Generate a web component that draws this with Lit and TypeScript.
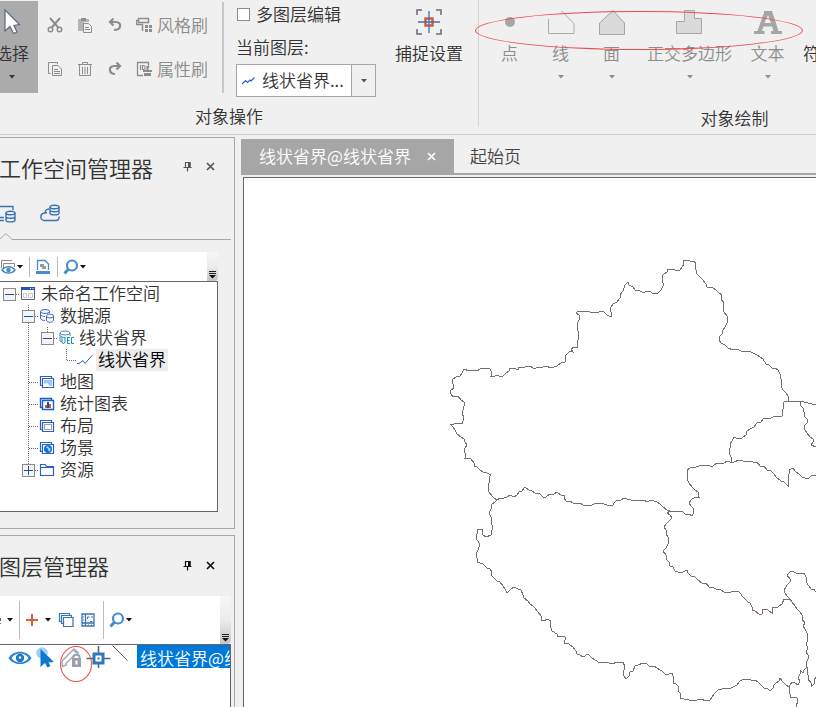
import { LitElement, html, svg, css, nothing, TemplateResult } from "lit";
import { customElement, state } from "lit/decorators.js";
import { classMap } from "lit/directives/class-map.js";

type Pt = [number, number];

/* Province boundaries, in map canvas units. */
const BORDERS: string[] = [
  "628,282 624,288 620,298 613,304 610,310 611,317 607,315 603,311 590,312 578,311 576,313 579,315 579,320 577,327 578,340 577,347 571,349 573,352 570,351 566,355 565,362 557,366 543,367 533,368 527,366 519,367 518,370 510,368 506,373 500,377 498,375 491,376 490,369 480,369 473,370 464,369 460,376 452,380 454,388 450,391 453,397 458,396 464,402 463,410 462,424 450,424 455,430 461,437 464,439 467,445 464,451 465,458 471,459 474,466 483,472 491,475 489,477 489,492 497,500",
  "497,500 507,497 517,495 525,487 532,491 546,497 557,492 564,495 566,501 573,503 583,505 600,503 607,505 613,505 617,500 627,499 640,500 654,501 660,504 670,511 678,511 692,516 693,508 689,503 692,499 699,497 698,492 689,483 687,470 692,467 710,466 720,463 730,462 743,461 753,462 764,466 777,478 788,486 789,470 793,468 805,478 812,475 820,475",
  "628,282 635,290 645,292 658,293 661,290 663,275 668,269 677,271 682,267 683,260 690,261 696,263 696,270 700,277 707,287 713,288 722,295 723,307 727,316 725,327 719,337 721,343 728,348 737,349 753,353 760,357 772,368 778,370 780,377 783,390 788,396 788,401",
  "788,401 784,402 782,416 764,418 750,429 742,438 734,437 730,448 731,462",
  "800,401 804,412 807,423 804,426 807,433 813,439 811,445 820,446",
  "670,511 667,513 672,518 664,527 668,537 666,548 663,551 670,566 678,572 687,570 691,576 702,583 713,587 727,593 738,591 745,599 750,603 752,610 762,614 763,609 772,613 773,607 782,604 784,599 790,599",
  "790,599 785,593 784,590 790,582 787,575 792,571 804,573 808,585 820,595",
  "790,599 800,612 805,623 803,626 807,636 807,667 811,687 820,670",
  "807,667 803,673 800,670 798,685 792,682 789,687 780,678 776,683 770,691 758,682 744,679 733,687 718,690 710,700 697,700 680,698 679,687 673,683 672,673 665,674 657,668 643,663 638,665 630,672 626,679 623,673 625,667 623,662 613,664 600,663 595,660 588,654 583,657 577,654 573,647 564,643 565,637 558,637 551,628 551,621 547,619 541,620 538,612 530,604 523,595 521,590 514,587 507,593 500,582 491,575 490,569 483,564 477,562 476,554 479,543 476,538 477,530 483,529 483,535 486,537 491,535 492,525 489,513 492,504 497,500",
  "789,687 791,698 797,698 797,712",
];

/* Breaks long runs into short ones with a slight wobble, as surveyed borders have. */
function roughen(line: string): string {
  const pts = line.split(" ").map((p) => p.split(",").map(Number) as Pt);
  const out: string[] = [pts[0].join(",")];
  let seed = 7;
  for (let i = 1; i < pts.length; i++) {
    const [ax, ay] = pts[i - 1];
    const [bx, by] = pts[i];
    const n = Math.max(1, Math.round(Math.hypot(bx - ax, by - ay) / 4));
    for (let k = 1; k < n; k++) {
      seed = (seed * 73 + 41) % 997;
      const w = (seed % 3) - 1;
      const steep = Math.abs(by - ay) > Math.abs(bx - ax);
      const x = Math.round(ax + ((bx - ax) * k) / n) + (steep ? w : 0);
      const y = Math.round(ay + ((by - ay) * k) / n) + (steep ? 0 : w);
      out.push(`${x},${y}`);
    }
    out.push(`${bx},${by}`);
  }
  return out.join(" ");
}

const icon = (w: number, h: number, body: unknown) =>
  html`<svg class="icon" width=${w} height=${h} viewBox="0 0 ${w} ${h}" fill="none" aria-hidden="true">${body}</svg>`;

const I = {
  arrow: () => icon(24, 28, svg`<path d="M5 3V24L10 19.500L13.500 26.500L17 25L14 18.500L19.500 17.500Z" fill="#fff" stroke="#5b6b80" stroke-width="1.200"/>`),
  cut: () => icon(16, 16, svg`<g stroke="#8c8c8c" stroke-width="1.400"><circle cx="3.500" cy="12.500" r="2.300"/><circle cx="12.500" cy="12.500" r="2.300"/></g><path d="M3 1L11.200 10.500M13 1L4.800 10.500" stroke="#8c8c8c" stroke-width="2"/>`),
  paste: () => icon(16, 16, svg`<path d="M1 2H12V5H7V14H1Z" fill="#b4b4b4"/><path d="M4 1H9V4H4Z" fill="#8c8c8c"/><path d="M6.500 6.500H11.500L14.500 9.500V15.500H6.500Z" fill="#f0f0f0" stroke="#8c8c8c"/><path d="M8 10.500H12M8 12.500H13" stroke="#8c8c8c"/>`),
  undo: () => icon(16, 16, svg`<path d="M6.500 1.500L3 5L6.500 8.500M3.500 5H9C12 5 13.500 7 13 9.500C12.500 12 10 13 7 13" stroke="#8c8c8c" stroke-width="2.200"/>`),
  redo: () => icon(16, 16, svg`<path d="M9.500 1.500L13 5L9.500 8.500M12.500 5H7C4 5 2.500 7 3 9.500C3.500 12 5 13 8 13" stroke="#8c8c8c" stroke-width="2.200"/>`),
  copy: () => icon(16, 16, svg`<path d="M10.500 3V1.500H1.500V12.500H3.500M5.500 4.500H11L14.500 8V14.500H5.500Z" stroke="#8c8c8c"/><path d="M7 8.500H11M7 10.500H13M7 12.500H13" stroke="#8c8c8c"/>`),
  bin: () => icon(16, 16, svg`<path d="M1 3.500H15M5.500 3V1.500H10.500V3M2.500 4V14.500H13.500V4M5.500 6V13M8 6V13M10.500 6V13" stroke="#8c8c8c"/>`),
  roller: () => icon(16, 16, svg`<path d="M2.500 1.500H12.500V5.500H2.500Z" stroke="#8c8c8c" stroke-width="1.500"/><path d="M2 3.500H0.500V7.500H6.500V14" stroke="#8c8c8c" stroke-width="1.500"/><path d="M9 8H12V11H9ZM13 8H16V11H13ZM9 12H12V15H9ZM13 12H16V15H13Z" fill="#8c8c8c"/>`),
  idBrush: () => icon(16, 16, svg`<path d="M7 14.500H1.500V1.500H12.500V7" stroke="#8c8c8c" stroke-width="1.300"/><path d="M4.500 4V9M6.500 4.500H8C9.500 4.500 9.500 8.500 8 8.500H6.500Z" stroke="#8c8c8c" stroke-width="1.200"/><path d="M10.500 5H12.500V9H16V11H7V9H10.500ZM8 12H15V15H8Z" fill="#8c8c8c"/>`),
  snap: () => icon(26, 26, svg`<path d="M1 6V1H6M20 1H25V6M25 20V25H20M6 25H1V20" stroke="#646a7c" stroke-width="1.500"/><path d="M9.500 9.500H16.500V16.500H9.500Z" stroke="#d8593a" stroke-width="2.500"/><path d="M13 2V24M2 13H24" stroke="#3873b3" stroke-width="1.300"/>`),
  point: () => icon(28, 28, svg`<circle cx="14" cy="14" r="5" fill="#a6a6a6"/>`),
  line: () => icon(28, 28, svg`<path d="M1.500 11V25.500H27V15.500L14.500 3" stroke="#ababab"/>`),
  face: () => icon(28, 28, svg`<path d="M1.500 26.500V15L15 2.500L26.500 15V26.500Z" fill="#dadada" stroke="#a6a6a6"/>`),
  ortho: () => icon(28, 28, svg`<path d="M0.500 25.500V13.500H8.500V2.500H18.500V10.500H25.500V25.500Z" fill="#dadada" stroke="#a6a6a6"/>`),
  letter: () => icon(28, 28, svg`<path d="M10 3H18L24.500 23H28V26H17V23H19.500L18 18.500H9.500L8 23H10.500V26H0V23H3.500L9.500 6H10ZM10.500 15H17L14 7Z" fill="#a6a6a6" fill-rule="evenodd"/>`),
  zig: () => icon(14, 10, svg`<path d="M1 8L4.500 4.500L6.500 6.500L9 4L10 5L13.500 1.500" stroke="#2c5fc4" stroke-width="1.200"/>`),
  caret: () => icon(6, 4, svg`<path d="M0 0H6L3 3.500Z" fill="currentColor"/>`),
  pin: () => icon(9, 11, svg`<path d="M2.500 1V6.500M7 1V6.500M2 1.500H7.500M0.500 6.500H8.500M4.500 7V10.500" stroke="currentColor" stroke-width="1.200"/><path d="M5 1H7.500V6H5Z" fill="currentColor"/>`),
  close: () => icon(9, 9, svg`<path d="M1 1L8 8M8 1L1 8" stroke="currentColor" stroke-width="1.700"/>`),
  localDb: () => icon(20, 20, svg`<path d="M0 3.500H17V7M0 17.500H8M2 14.500H8" stroke="#3873b3" stroke-width="1.400"/><ellipse cx="14.500" cy="10" rx="4.500" ry="1.800" stroke="#3873b3" stroke-width="1.400"/><path d="M10 10V17C10 19.500 19 19.500 19 17V10M10 13.500C10 15.800 19 15.800 19 13.500" stroke="#3873b3" stroke-width="1.400"/>`),
  cloudDb: () => icon(20, 20, svg`<ellipse cx="14.500" cy="4" rx="4.500" ry="1.800" stroke="#3873b3" stroke-width="1.400"/><path d="M10 4V10C10 12.500 19 12.500 19 10V4M10 7C10 9.300 19 9.300 19 7" stroke="#3873b3" stroke-width="1.400"/><path d="M9 6C6 6 5 8.500 5 10C-0.500 10.500 -0.500 17.500 4.500 17.500H16C18 17.500 19.500 16 19 13.500M5 10L7 9.500" stroke="#3873b3" stroke-width="1.400"/>`),
  layersEye: () => icon(16, 16, svg`<path d="M1.500 9V1.500H12M3.500 9V4.500H14.500V8" stroke="#8c8c8c"/><path d="M2 11C5 6.500 12 6.500 15 11C12 15 5 15 2 11Z" fill="#fff" stroke="#4a8bca" stroke-width="1.500"/><circle cx="8.500" cy="11" r="2.300" fill="#4a8bca"/>`),
  picture: () => icon(16, 16, svg`<path d="M2.500 11V1.500H10L13.500 5V11" stroke="#4a8bca" stroke-width="1.300"/><path d="M5 5H9V7H11V10H7V8H5Z" fill="#999"/><path d="M1 12H15V15H1Z" fill="#4a8bca"/>`),
  lens: () => icon(16, 16, svg`<circle cx="9" cy="6.500" r="5" stroke="#4a8bca" stroke-width="2.200"/><path d="M5.500 10L1.500 14.500" stroke="#4a8bca" stroke-width="3"/>`),
  more: () => icon(9, 9, svg`<path d="M1 1.500H8M1 3.500H8" stroke="#222"/><path d="M1 5H8L4.500 8.500Z" fill="#111"/>`),
  workspace: () => icon(18, 16, svg`<path d="M2.500 2.500H15.500V13.500H2.500Z" stroke="#5a6476"/><path d="M2 1H16V4H2Z" fill="#1f55b5"/><path d="M11 2.500H12M13.500 2.500H14.500" stroke="#fff"/><path d="M4.500 7.500H7.500V11.500H4.500ZM9.500 7.500H13.500V11.500H9.500Z" stroke="#c8c8c8"/>`),
  sources: () => icon(18, 16, svg`<g stroke="#3a6cc0"><ellipse cx="7" cy="3.500" rx="4.500" ry="2"/><path d="M2.500 3.500V10C2.500 12 5 12.500 7 12.500M2.500 6.500C3 8 5 8.500 7 8.500M11.500 3.500V5"/><path d="M8.500 8V12C8.500 15 15.500 15 15.500 12V8" fill="#fff"/><ellipse cx="12" cy="8" rx="3.500" ry="2" fill="#fff"/></g>`),
  vector: () => icon(18, 16, svg`<ellipse cx="8" cy="3" rx="5" ry="2" stroke="#4a87a8"/><path d="M3 3V11L5 12M13 3V6M3 5.500C4 7 6 7.500 8 7.500" stroke="#4a87a8"/><path d="M5 7V12L6.500 14L8 12V7M13 7.500H10.500V13.500H13M10.500 10.500H12.500M17 7.500H14.500V13.500H17" stroke="#1e8cc0"/>`),
  polyline: () => icon(18, 16, svg`<path d="M1 11.500H3L7 8.500L9 11.500L16 3.500" stroke="#2c5fc4"/>`),
  map: () => icon(18, 16, svg`<path d="M4 11.500H2.500V2.500H13.500V4M4.500 4.500H15.500V13.500H4.500Z" stroke="#2c5fc4" stroke-width="1.200"/><path d="M6 6H14V12H12L9 9L6 10Z" fill="#9cc8f4"/>`),
  chart: () => icon(18, 16, svg`<path d="M4 11.500H2.500V2.500H13.500V4M4.500 4.500H15.500V13.500H4.500Z" stroke="#1a62c0" stroke-width="1.400"/><path d="M9 6H11V12H9Z" fill="#1a4f9c"/><path d="M7 9H9V12H7ZM11 8H13V12H11Z" fill="#d8593a"/>`),
  layout: () => icon(18, 16, svg`<path d="M4 11.500H2.500V2.500H13.500V4M4.500 4.500H15.500V13.500H4.500Z" stroke="#2c5fc4" stroke-width="1.200"/><path d="M6.500 6.500H13.500V11.500H6.500Z" stroke="#444" stroke-dasharray="1 1"/>`),
  scene: () => icon(18, 16, svg`<path d="M4 11.500H2.500V2.500H13.500V4M4.500 4.500H15.500V13.500H4.500Z" stroke="#2c5fc4" stroke-width="1.200"/><circle cx="10" cy="9" r="4" fill="#1273c4"/><path d="M8 7L10 6L11 8L13 9L11 12L10 9Z" fill="#a7dcf7"/>`),
  folder: () => icon(18, 16, svg`<path d="M2.500 13.500V2.500H7L8.500 4.500H15.500V13.500ZM2.500 5.500H15" stroke="#2c5fc4" stroke-width="1.200"/>`),
  plus: () => icon(14, 14, svg`<path d="M7 1V13M1 7H13" stroke="#d2603f" stroke-width="2"/>`),
  stack: () => icon(16, 16, svg`<path d="M3 9.500H1.500V1.500H11.500V3M5 11.500H3.500V3.500H13.500V5M5.500 5.500H15V14.500H5.500Z" stroke="#3873b3" stroke-width="1.200"/>`),
  frame: () => icon(14, 14, svg`<path d="M1 1H13V13H1ZM4.500 1V13M1 10H13" stroke="#3873b3" stroke-width="1.300"/><path d="M6.500 6V4H8.500M11 8V8.500H9M11 3V5M2 4H3M2 7H3M7 12H8M10 12H11" stroke="#3873b3"/>`),
  eye: () => icon(24, 26, svg`<path d="M0.500 13C5.500 4.500 18.500 4.500 23.500 13C18.500 21 5.500 21 0.500 13Z" fill="#2a83cc"/><path d="M3.500 13C6 9.500 9 8.500 12 8.500C15 8.500 18 9.500 20.500 13C18 16.500 15 17.500 12 17.500C9 17.500 6 16.500 3.500 13Z" fill="#fff"/><circle cx="12" cy="13" r="4.200" fill="#1c78c6"/><circle cx="12" cy="12.500" r="1.300" fill="#fff"/>`),
  pick: () => icon(28, 24, svg`<circle cx="10" cy="8" r="5.800" fill="#9ed1f5"/><path d="M8.500 4V22L13 18L15.500 22.500L18.500 21L16.500 17.500L22 17Z" fill="#0d7ad0"/>`),
  lock: () => icon(24, 24, svg`<path d="M2 16L13 5L18 9M5.500 19L15.500 9M2 16L2.500 21.500L7 19.500M7 11L14 4L19 8" stroke="#a9adb5" stroke-width="1.600"/><path d="M12 13H21V22H12Z" fill="#9b9fa9"/><path d="M13.500 14V12C13.500 9 19.500 9 19.500 12V14" stroke="#9b9fa9" stroke-width="1.800"/><path d="M16.500 15.500V19.500" stroke="#fff" stroke-width="2"/>`),
  target: () => icon(28, 24, svg`<path d="M14.500 1V23M2.500 13.500H26.500" stroke="#5c6474" stroke-width="1.600"/><path d="M10 9H19V18H10Z" fill="#fff" stroke="#2f78b8" stroke-width="3"/><path d="M13.500 12.500H15.500V14.500H13.500Z" fill="#2f78b8"/>`),
  stroke: () => icon(16, 16, svg`<path d="M0.500 0.500L15.500 15.500" stroke="#5f5560"/>`),
};

const dotted = (d: string) => svg`<path d=${d} stroke="#666" stroke-dasharray="1 1"/>`;

/* One indent step of the tree: a guide line, an elbow or an expander box. */
const cell = (kind: string) => {
  const box = kind.includes("-") || kind.includes("+");
  return html`<svg class="icon" width="19" height="22" viewBox="0 0 19 22" fill="none" shape-rendering="crispEdges" aria-hidden="true">
    ${kind.includes("u") ? dotted("M9.500 0V11") : nothing}
    ${kind.includes("d") ? dotted("M9.500 12V22") : nothing}
    ${kind.includes("r") ? dotted("M9.500 11.500H19") : nothing}
    ${box ? svg`<path d="M3.500 5.500H15.500V17.500H3.500Z" fill="#f4f4f4" stroke="#8a8a8a"/><path d="M5 11.500H14" stroke="#234c9c"/>` : nothing}
    ${kind.includes("+") ? svg`<path d="M9.500 7V16" stroke="#234c9c"/>` : nothing}
  </svg>`;
};

interface Node { cells: string[]; pic: () => TemplateResult; text: string }

const TREE: Node[] = [
  { cells: ["-r"], pic: I.workspace, text: "未命名工作空间" },
  { cells: ["", "-udr"], pic: I.sources, text: "数据源" },
  { cells: ["", "ud", "-ur"], pic: I.vector, text: "线状省界" },
  { cells: ["", "ud", "", "ur"], pic: I.polyline, text: "线状省界" },
  { cells: ["", "udr"], pic: I.map, text: "地图" },
  { cells: ["", "udr"], pic: I.chart, text: "统计图表" },
  { cells: ["", "udr"], pic: I.layout, text: "布局" },
  { cells: ["", "udr"], pic: I.scene, text: "场景" },
  { cells: ["", "+ur"], pic: I.folder, text: "资源" },
];

@customElement("app-root")
class AppRoot extends LitElement {
  @state() private current = 3;

  static styles = css`
    :host {
      display: block;
      font: 350 17px/22px "Noto Sans CJK SC", sans-serif;
      color: #333;
    }
    * { box-sizing: border-box; }
    .icon { display: block; flex: none; }
    button, select {
      font: inherit; color: inherit; background: none; border: 0; padding: 0; margin: 0;
      white-space: nowrap;
    }
    .app {
      display: flex; flex-direction: column; height: 100vh; overflow: hidden;
      background: #f0f0f0; position: relative;
    }

    .ribbon { display: flex; flex: none; height: 135px; border-bottom: 1px solid #d0d0d0; overflow: hidden; position: relative; }
    .group { display: flex; flex-direction: column; flex: none; }
    .edit { width: 499px; margin-left: -20px; border-right: 1px solid #d4d4d4; height: 127px; }
    .draw { width: 511px; }
    .tools { display: flex; height: 107px; }
    .caption { text-align: center; }
    .edit .tools { padding-left: 6px; }
    .draw .tools { padding-left: 5px; }
    .big { display: flex; flex-direction: column; align-items: center; height: 92px; }
    .big .name { margin-top: 7px; height: 33px; }
    .select { width: 52px; margin-top: 1px; background: #ababab; padding-top: 6px; }
    .clip { display: grid; grid-template-columns: 30px 30px 30px 84px; grid-template-rows: 44px 44px; margin: 3px 8px 0 2px; }
    .clip button { display: flex; align-items: center; justify-content: center; gap: 5px; color: #8c8c8c; }
    .rule { width: 2px; height: 91px; margin-top: 2px; background: #c8c8c8; flex: none; }
    .layer { margin: 3px 0 0 12px; width: 140px; }
    .check { display: flex; align-items: center; gap: 6px; }
    .check input { appearance: none; width: 13px; height: 13px; margin: 0 0 0 1px; border: 1px solid #8c8c8c; background: #fff; }
    .of { display: block; margin-top: 11px; }
    .combo { display: flex; align-items: center; height: 33px; margin-top: 6px; background: #fff; border: 1px solid #a6a6a6; padding-left: 4px; }
    .combo select { appearance: none; flex: 1; padding: 0 0 2px 7px; height: 31px; min-width: 0; }
    .drop { display: flex; align-items: center; justify-content: center; width: 24px; height: 31px; border-left: 1px solid #a6a6a6; background: #f0f0f0; color: #555; flex: none; }
    .snap { margin-left: 19px; padding-top: 9px; }
    .draw .big { width: 51px; padding-top: 8px; color: #8c8c8c; }
    .draw .big.wide { width: 105px; }
    .draw .big .name { margin-top: 6px; }
    .draw .big.sign { width: 54px; color: #333; padding-top: 36px; }

    .mark { position: absolute; border: 1px solid #f04a4a; border-radius: 50%; pointer-events: none; }
    .mark.tools-mark { left: 475px; top: 11px; width: 328px; height: 39px; }
    .mark.lock-mark { left: 60px; top: 1px; width: 32px; height: 36px; }

    .main { display: flex; flex: 1; min-height: 0; }
    .side { width: 235px; flex: none; display: flex; flex-direction: column; padding-top: 2px; gap: 6px; }
    .panel { border: solid #a6a6a6; border-width: 1px 1px 1px 0; }
    .workspace { height: 392px; flex: none; }
    .layers { flex: 1; border-bottom: 0; }
    .head { display: flex; align-items: center; height: 57px; padding-right: 19px; color: #555; }
    .head h2 { flex: 1; margin: 0; font: 350 22px/32px "Noto Sans CJK SC", sans-serif; white-space: nowrap; margin-left: -1px; color: #333; }
    .head button { display: flex; }
    .head button + button { margin-left: 14px; }
    .layers .head { color: #111; height: 60px; padding-bottom: 2px; }
    .tabs { display: flex; gap: 24px; height: 38px; padding-top: 8px; margin-left: -4px; }
    .tabs button { height: 20px; }
    .notch { display: block; width: 231px; height: 7px; }
    .bar { display: flex; background: #fff; align-items: center; height: 29px; color: #111; }
    .bar button { display: flex; align-items: center; gap: 1px; }
    .workspace .bar { width: 218px; margin-top: 12px; border-radius: 0 4px 0 0; }
    .sep { width: 1px; height: 20px; background: #bbb; margin: 0 5px 0 6px; }
    .grip { align-self: stretch; margin-left: auto; width: 11px; background: linear-gradient(#f6f6f6, #ececec 50%, #c4c4c4); }
    .bar .grip { align-items: flex-end; justify-content: center; padding-bottom: 2px; border-radius: 0 4px 4px 0; }
    .tree { width: 218px; height: 231px; margin: 0; padding: 1px 0; list-style: none; background: #fff; border: solid #666; border-width: 1px 1px 1px 0; }
    .tree li { display: flex; align-items: center; height: 22px; }
    .tree button { padding: 0 2px 2px; margin-left: 2px; height: 22px; line-height: 20px; }
    .tree .on { background: #ececec; color: #000; }
    .layers .bar { width: 231px; height: 48px; border-radius: 0 4px 0 0; }
    .layers .sep { height: 38px; }
    .bar .add { gap: 6px; }
    .bar .stacked { margin: 0 7px; }
    .bar .extent { margin-right: 2px; }
    .list { position: relative; width: 231px; height: 100%; background: #fff; border: solid #666; border-width: 1px 1px 0 0; }
    .row { display: flex; align-items: flex-start; overflow: hidden; height: 24px; padding-left: 8px; }
    .row button { display: flex; flex: none; }
    .row .title { display: block; margin-left: 9px; background: #0078d7; color: #fff; height: 23px; line-height: 25px; padding-left: 3px; }

    .doc { flex: 1; min-width: 0; display: flex; flex-direction: column; margin-left: 6px; padding-top: 4px; }
    .doctabs { display: flex; height: 36px; border-bottom: 2px solid #a6a6a6; flex: none; }
    .doctabs button { padding: 0 16px; color: #444; line-height: 34px; }
    .doctabs .active { display: flex; align-items: center; gap: 16px; padding: 0 18px; background: #a6a6a6; color: #fff; }
    .canvas { flex: 1; min-height: 0; margin-top: 2px; margin-left: 2px; border: solid #666; border-width: 1px 0 0 1px; background: #fff; overflow: hidden; }
    .canvas svg { display: block; }
  `;

  private tool(name: string, pic: TemplateResult, caret = true, wide = false) {
    return html`<button class=${classMap({ big: true, wide })}>
      ${pic}<span class="name">${name}</span>${caret ? I.caret() : nothing}
    </button>`;
  }

  render() {
    return html`<div class="app">
      <header class="ribbon">
        <section class="group edit">
          <div class="tools">
            <button class="big select">${I.arrow()}<span class="name">选择</span>${I.caret()}</button>
            <div class="clip">
              <button aria-label="剪切">${I.cut()}</button>
              <button aria-label="粘贴">${I.paste()}</button>
              <button aria-label="撤销">${I.undo()}</button>
              <button>${I.roller()}风格刷</button>
              <button aria-label="复制">${I.copy()}</button>
              <button aria-label="删除">${I.bin()}</button>
              <button aria-label="重做">${I.redo()}</button>
              <button>${I.idBrush()}属性刷</button>
            </div>
            <div class="rule"></div>
            <div class="layer">
              <label class="check"><input type="checkbox" />多图层编辑</label>
              <label class="of" for="layer">当前图层:</label>
              <div class="combo">
                ${I.zig()}
                <select id="layer"><option>线状省界...</option></select>
                <span class="drop">${I.caret()}</span>
              </div>
            </div>
            <button class="big snap">${I.snap()}<span class="name">捕捉设置</span></button>
          </div>
          <div class="caption">对象操作</div>
        </section>
        <section class="group draw">
          <div class="tools">
            ${this.tool("点", I.point(), false)}
            ${this.tool("线", I.line())}
            ${this.tool("面", I.face())}
            ${this.tool("正交多边形", I.ortho(), true, true)}
            ${this.tool("文本", I.letter())}
            <button class="big sign"><span class="name">符号</span></button>
          </div>
          <div class="caption">对象绘制</div>
        </section>
        <div class="mark tools-mark"></div>
      </header>

      <div class="main">
        <aside class="side">
          <section class="panel workspace">
            <div class="head">
              <h2>工作空间管理器</h2>
              <button aria-label="固定">${I.pin()}</button>
              <button aria-label="关闭">${I.close()}</button>
            </div>
            <div class="tabs">
              <button aria-label="本地">${I.localDb()}</button>
              <button aria-label="云端">${I.cloudDb()}</button>
            </div>
            <svg class="notch" viewBox="0 0 231 7" fill="none" aria-hidden="true"><path d="M0 6L6 0.500L12 6.500H231" stroke="#a6a6a6"/></svg>
            <div class="bar">
              <button aria-label="可见">${I.layersEye()}${I.caret()}</button>
              <i class="sep"></i>
              <button aria-label="图片">${I.picture()}</button>
              <i class="sep"></i>
              <button aria-label="查找">${I.lens()}${I.caret()}</button>
              <button class="grip" aria-label="更多">${I.more()}</button>
            </div>
            <ul class="tree">
              ${TREE.map((n, i) => html`<li>
                ${n.cells.map(cell)}${n.pic()}
                <button class=${classMap({ on: i === this.current })} @click=${() => (this.current = i)}>${n.text}</button>
              </li>`)}
            </ul>
          </section>

          <section class="panel layers">
            <div class="head">
              <h2>图层管理器</h2>
              <button aria-label="固定">${I.pin()}</button>
              <button aria-label="关闭">${I.close()}</button>
            </div>
            <div class="bar">
              <svg class="icon" width="7" height="16" viewBox="0 0 7 16" aria-hidden="true"><path d="M0 6H1V9H0Z" fill="#3873b3"/><path d="M0 11H1V12H0Z" fill="#d2603f"/></svg>
              <button aria-label="样式">${I.caret()}</button>
              <i class="sep"></i>
              <button class="add" aria-label="添加">${I.plus()}${I.caret()}</button>
              <button class="stacked" aria-label="图层组">${I.stack()}</button>
              <button class="extent" aria-label="范围">${I.frame()}</button>
              <i class="sep"></i>
              <button aria-label="查找">${I.lens()}${I.caret()}</button>
              <button class="grip" aria-label="更多">${I.more()}</button>
            </div>
            <div class="list">
              <div class="row">
                <button aria-label="可见">${I.eye()}</button>
                <button aria-label="可选">${I.pick()}</button>
                <button aria-label="可编辑">${I.lock()}</button>
                <button aria-label="可捕捉">${I.target()}</button>
                ${I.stroke()}
                <button class="title">线状省界@线状省界</button>
              </div>
              <div class="mark lock-mark"></div>
            </div>
          </section>
        </aside>

        <main class="doc">
          <div class="doctabs">
            <button class="active">线状省界@线状省界${I.close()}</button>
            <button>起始页</button>
          </div>
          <div class="canvas">
            <svg width="572" height="529" viewBox="244 178 572 529" fill="none" role="img" aria-label="省界">
              <g stroke="#7c6c72" shape-rendering="crispEdges">
                ${BORDERS.map((b) => svg`<polyline points=${roughen(b)} />`)}
                <polyline points="788,401 800,401 808,403 820,406" />
              </g>
            </svg>
          </div>
        </main>
      </div>
    </div>`;
  }
}
